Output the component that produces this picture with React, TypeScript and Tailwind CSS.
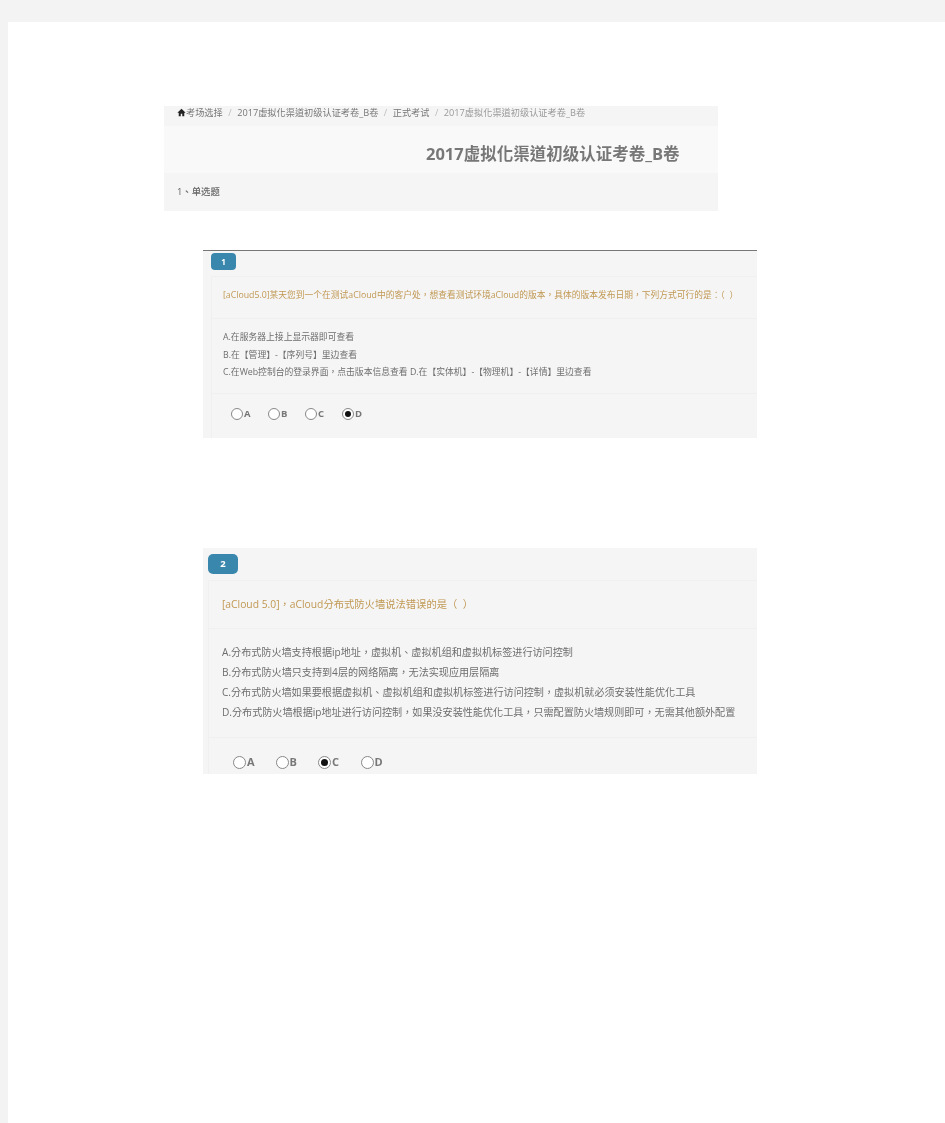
const FONT = "font-['Open_Sans','Noto_Sans_CJK_TC',sans-serif]";

const Radio = ({ label, checked, box, size, text }: { label: string; checked?: boolean; box: string; size: string; text: string }) => (
  <div className={`${box} flex items-center gap-[1px]`}>
    <span className={`${size} rounded-full border border-[#888] bg-white flex items-center justify-center`}>
      {checked && <span className="w-[60%] h-[60%] rounded-full bg-[#111]" />}
    </span>
    <span className={`${text} font-bold text-[#777]`}>{label}</span>
  </div>
);

const Sep = () => <span className="mx-[5.5px] text-[#bbb]">/</span>;

const Breadcrumb = () => (
  <div className="h-[20px] pl-[13px] flex items-start bg-[#f5f5f5] text-[9.2px] leading-[13px] text-[#777] whitespace-nowrap">
    <svg viewBox="0 0 12 12" className="w-[9px] h-[9px] mt-[2px] fill-[#222]">
      <path d="M6 1 0.5 6.2H2.3V11H5V7.6H7V11H9.7V6.2H11.5Z" />
    </svg>
    <span>考场选择</span>
    <Sep />
    <span>2017虚拟化渠道初级认证考卷_B卷</span>
    <Sep />
    <span>正式考试</span>
    <Sep />
    <span className="text-[#999]">2017虚拟化渠道初级认证考卷_B卷</span>
  </div>
);

export default function App() {
  return (
    <div className={`min-h-[1123px] bg-[#f3f3f3] pl-[8px] pt-[22px] ${FONT}`}>
      <div className="min-h-[1101px] bg-white pt-[84px] flex flex-col blur-[0.4px]">
        <div className="ml-[156px] w-[554px] flex flex-col">
          <Breadcrumb />
          <div className="h-[47px] bg-[#f9f9f9] pl-[262px] pt-[9px] flex items-center text-[16.5px] font-bold text-[#777]">
            2017虚拟化渠道初级认证考卷_B卷
          </div>
          <div className="h-[38px] bg-[#f5f5f5] pl-[13px] flex items-center text-[9.4px] font-medium text-[#666]">
            1、单选题
          </div>
        </div>

        <div className="ml-[195px] mt-[39px] w-[554px] h-[188px] bg-[#f5f5f5] border-t border-[#777] overflow-hidden flex flex-col">
          <div className="h-[25px] pl-[8px] pt-[2px]">
            <div className="w-[25px] h-[17px] rounded-[4px] bg-[#3a87ad] flex items-center justify-center text-[8px] font-bold text-white">1</div>
          </div>
          <div className="ml-[8px] h-[42px] px-[11px] pb-[3px] border-t border-l border-[#f0f0f0] flex items-center text-[8.75px] text-[#c09853] whitespace-nowrap">
            [aCloud5.0]某天您到一个在测试aCloud中的客户处，想查看测试环境aCloud的版本，具体的版本发布日期，下列方式可行的是：（&nbsp;&nbsp;）
          </div>
          <div className="ml-[8px] h-[75px] px-[11px] pt-[10px] border-t border-l border-[#f0f0f0] text-[8.8px] leading-[17.5px] text-[#6e6e6e] whitespace-nowrap">
            <p>A.在服务器上接上显示器即可查看</p>
            <p>B.在【管理】-【序列号】里边查看</p>
            <p>C.在Web控制台的登录界面，点击版本信息查看 D.在【实体机】-【物理机】-【详情】里边查看</p>
          </div>
          <div className="ml-[8px] flex-1 pl-[19px] pt-[13px] border-t border-l border-[#f0f0f0] flex items-start">
            <Radio label="A" box="w-[37px]" size="w-[12px] h-[12px]" text="text-[9.5px]" />
            <Radio label="B" box="w-[37px]" size="w-[12px] h-[12px]" text="text-[9.5px]" />
            <Radio label="C" box="w-[37px]" size="w-[12px] h-[12px]" text="text-[9.5px]" />
            <Radio label="D" checked box="w-[37px]" size="w-[12px] h-[12px]" text="text-[9.5px]" />
          </div>
        </div>

        <div className="ml-[195px] mt-[110px] w-[554px] h-[226px] bg-[#f5f5f5] overflow-hidden flex flex-col">
          <div className="h-[32px] pl-[5px] pt-[6px]">
            <div className="w-[30px] h-[20px] rounded-[5px] bg-[#3a87ad] flex items-center justify-center text-[9.5px] font-bold text-white">2</div>
          </div>
          <div className="ml-[5px] h-[48px] px-[13px] border-t border-l border-[#f0f0f0] flex items-center text-[10.3px] text-[#c09853] whitespace-nowrap">
            [aCloud 5.0]，aCloud分布式防火墙说法错误的是（&nbsp;&nbsp;）
          </div>
          <div className="ml-[5px] h-[109px] px-[13px] pt-[13px] border-t border-l border-[#f0f0f0] text-[10.1px] leading-[20px] text-[#6e6e6e] whitespace-nowrap">
            <p>A.分布式防火墙支持根据ip地址，虚拟机、虚拟机组和虚拟机标签进行访问控制</p>
            <p>B.分布式防火墙只支持到4层的网络隔离，无法实现应用层隔离</p>
            <p>C.分布式防火墙如果要根据虚拟机、虚拟机组和虚拟机标签进行访问控制，虚拟机就必须安装性能优化工具</p>
            <p>D.分布式防火墙根据ip地址进行访问控制，如果没安装性能优化工具，只需配置防火墙规则即可，无需其他额外配置</p>
          </div>
          <div className="ml-[5px] flex-1 pl-[24px] pt-[16px] border-t border-l border-[#f0f0f0] flex items-start">
            <Radio label="A" box="w-[42.5px]" size="w-[13px] h-[13px]" text="text-[11px]" />
            <Radio label="B" box="w-[42.5px]" size="w-[13px] h-[13px]" text="text-[11px]" />
            <Radio label="C" checked box="w-[42.5px]" size="w-[13px] h-[13px]" text="text-[11px]" />
            <Radio label="D" box="w-[42.5px]" size="w-[13px] h-[13px]" text="text-[11px]" />
          </div>
        </div>
      </div>
    </div>
  );
}
